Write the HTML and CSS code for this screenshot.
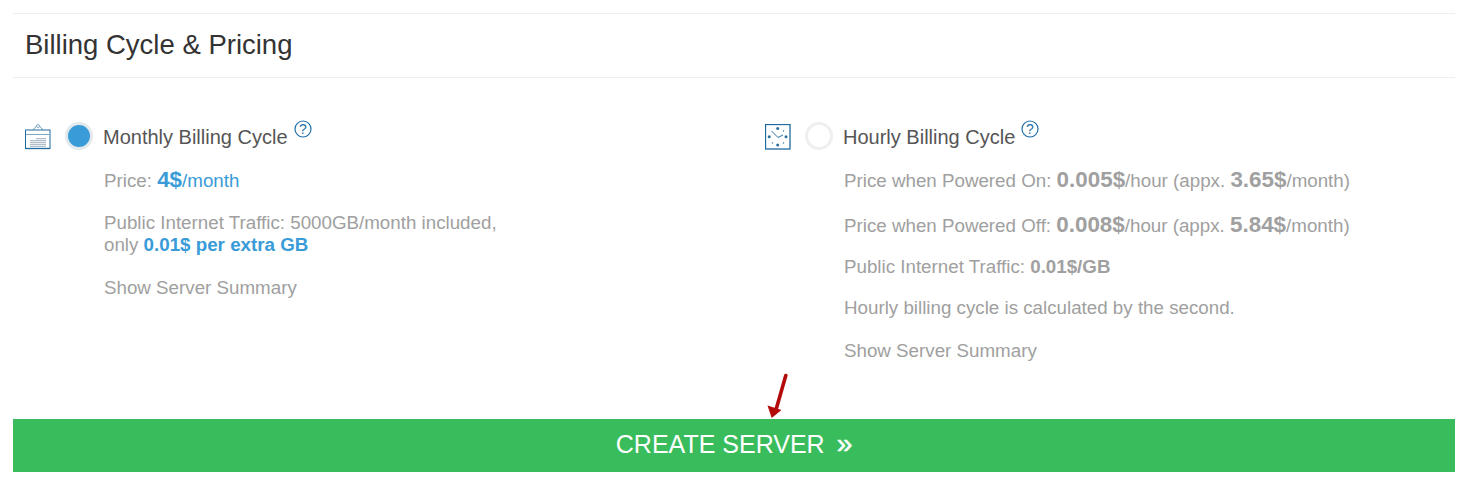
FILE: index.html
```html
<!DOCTYPE html>
<html lang="en">
<head>
<meta charset="utf-8">
<title>Billing Cycle &amp; Pricing</title>
<link rel="stylesheet" href="styles.css">
</head>
<body>
<div class="panel">
  <h2 class="title">Billing Cycle &amp; Pricing</h2>
  <div class="plans">
    <section class="plan plan-monthly">
      <div class="plan-head">
        <svg class="plan-icon" width="26" height="26" viewBox="0 0 26 26">
          <path d="M8 6 L11.500 2 H14.500 L18 6" fill="none" stroke="#6f9cb8" stroke-width="1"/>
          <circle cx="13" cy="2" r="1.500" fill="#fff" stroke="#6f9cb8" stroke-width=".8"/>
          <rect x=".5" y="6" width="24.500" height="18.500" fill="#fff" stroke="#1f6a9f" stroke-width="1"/>
          <path d="M1 10.500 H24.500" stroke="#7aa8c6" stroke-width="1"/>
          <path d="M6 16 V23 M8 16 V23 M10 16 V23 M12 14 V23 M14 14 V23 M16 14 V23 M18 14 V23 M20 14 V23" stroke="#7d93a6" stroke-width="1.200" stroke-dasharray="1.200 .8"/>
          <path d="M.5 24.500 H25" stroke="#1f6a9f" stroke-width="1.300"/>
        </svg>
        <span class="radio radio-on"></span>
        <span class="plan-name">Monthly Billing Cycle</span>
        <svg class="help" width="18" height="18" viewBox="0 0 18 18">
          <circle cx="9" cy="9" r="8" fill="#fff" stroke="#1f6fa8" stroke-width="1.200"/>
          <text x="9" y="13.500" text-anchor="middle" class="help-q">?</text>
        </svg>
      </div>
      <div class="plan-body">
        <p class="line l-price">Price: <b class="big blue">4$</b><span class="blue">/month</span></p>
        <p class="line l-traffic">Public Internet Traffic: 5000GB/month included,<br>only <b class="blue">0.01$ per extra GB</b></p>
        <p class="line l-summary">Show Server Summary</p>
      </div>
    </section>
    <section class="plan plan-hourly">
      <div class="plan-head">
        <svg class="plan-icon" width="26" height="26" viewBox="0 0 26 26">
          <rect x=".5" y=".5" width="24.500" height="24.500" fill="#fff" stroke="#1f6a9f" stroke-width="1.300"/>
          <path d="M6.500 7 L13 13.500 L18 11" fill="none" stroke="#2b6f9f" stroke-width="1"/>
          <g fill="#2b6f9f">
            <circle cx="12.700" cy="4.500" r="1.500"/><circle cx="12.700" cy="21" r="1.500"/>
            <circle cx="4.200" cy="12.700" r="1.500"/><circle cx="21" cy="12.700" r="1.500"/>
            <circle cx="7.500" cy="19" r=".7"/><circle cx="18.500" cy="19" r=".7"/>
            <circle cx="18.500" cy="7" r=".7"/>
          </g>
        </svg>
        <span class="radio"></span>
        <span class="plan-name">Hourly Billing Cycle</span>
        <svg class="help" width="18" height="18" viewBox="0 0 18 18">
          <circle cx="9" cy="9" r="8" fill="#fff" stroke="#1f6fa8" stroke-width="1.200"/>
          <text x="9" y="13.500" text-anchor="middle" class="help-q">?</text>
        </svg>
      </div>
      <div class="plan-body">
        <p class="line h-on">Price when Powered On: <b class="big">0.005$</b>/hour (appx. <b class="big">3.65$</b>/month)</p>
        <p class="line h-off">Price when Powered Off: <b class="big">0.008$</b>/hour (appx. <b class="big">5.84$</b>/month)</p>
        <p class="line h-traffic">Public Internet Traffic: <b>0.01$/GB</b></p>
        <p class="line h-note">Hourly billing cycle is calculated by the second.</p>
        <p class="line h-summary">Show Server Summary</p>
      </div>
    </section>
  </div>
  <div class="cta-wrap">
    <svg class="cta-arrow" width="24" height="46" viewBox="0 0 24 46">
      <path d="M21.800 2.500 L12.500 35" fill="none" stroke="#b30a0a" stroke-width="3.600" stroke-linecap="round"/>
      <path d="M3.500 32.500 L7.700 45 L17.500 37 Z" fill="#b30a0a"/>
    </svg>
    <button class="cta" type="button">CREATE SERVER<span class="cta-chev">»</span></button>
  </div>
</div>
</body>
</html>
```

FILE: styles.css
```css
* { box-sizing: border-box; }
html, body { margin: 0; padding: 0; background: #fff; }
body {
  font-family: "Liberation Sans", Arial, sans-serif;
  color: #a0a0a0;
  overflow: hidden;
}
.panel { margin: 13px 12px 0 13px; border-top: 1px solid #eee; }
.title {
  margin: 0;
  height: 64px;
  padding: 15px 0 0 12px;
  font-size: 27.5px;
  line-height: 32px;
  font-weight: 400;
  color: #333;
  border-bottom: 1px solid #eee;
}
.plans { display: flex; height: 341px; }
.plan { flex: 0 0 auto; }
.plan-monthly { width: 740px; padding: 43px 0 0 12px; }
.plan-hourly { flex: 1; padding: 43px 0 0 12px; }
.plan-head { display: flex; align-items: flex-start; height: 30px; }
.plan-icon { margin-top: 3px; flex: none; }
.radio {
  flex: none;
  width: 28px;
  height: 28px;
  margin: 1px 0 0 14px;
  border-radius: 50%;
  background: #fff;
  border: 3px solid #efefef;
}
.radio-on { background: #399bd7; border-color: #e3e9ed; }
.plan-name {
  margin: 3px 0 0 10px;
  font-size: 20px;
  line-height: 26px;
  color: #555;
}
.help { flex: none; margin: -1px 0 0 6px; }
.help-q { font: 400 14px "Liberation Sans", Arial, sans-serif; fill: #1f6fa8; }
.plan-body { padding: 0 0 0 79px; }
.line { margin: 0; font-size: 18.75px; line-height: 22px; color: #a0a0a0; }
.line b { font-weight: 700; }
.line .big { font-size: 22.4px; }
.line .blue { color: #399bd7; }
.l-price { margin-top: 18px; }
.l-traffic { margin-top: 20px; }
.l-summary { margin-top: 21px; }
.h-on { margin-top: 18px; }
.h-off { margin-top: 22px; }
.h-traffic { margin-top: 19px; }
.h-note { margin-top: 19px; }
.h-summary { margin-top: 21px; }
.cta-wrap { position: relative; }
.cta {
  display: block;
  width: 100%;
  height: 53px;
  border: 0;
  padding: 0 0 2px 0;
  background: #39bd5c;
  color: #fff;
  font: 400 25px/51px "Liberation Sans", Arial, sans-serif;
}
.cta-chev { margin-left: 12px; font-size: 28px; line-height: 20px; -webkit-text-stroke: .6px #fff; }
.cta-arrow { position: absolute; left: 751px; top: -46px; }
```
